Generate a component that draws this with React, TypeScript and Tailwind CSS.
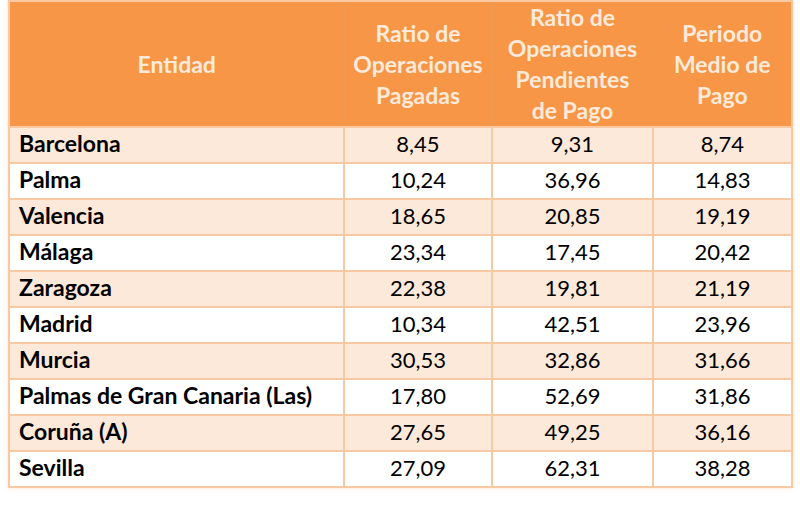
const rows: [string, string, string, string][] = [
  ['Barcelona', '8,45', '9,31', '8,74'],
  ['Palma', '10,24', '36,96', '14,83'],
  ['Valencia', '18,65', '20,85', '19,19'],
  ['Málaga', '23,34', '17,45', '20,42'],
  ['Zaragoza', '22,38', '19,81', '21,19'],
  ['Madrid', '10,34', '42,51', '23,96'],
  ['Murcia', '30,53', '32,86', '31,66'],
  ['Palmas de Gran Canaria (Las)', '17,80', '52,69', '31,86'],
  ['Coruña (A)', '27,65', '49,25', '36,16'],
  ['Sevilla', '27,09', '62,31', '38,28'],
]

export default function App() {
  return (
    <div className="w-[800px] h-[507px] bg-white pl-[8px] font-['Lato',sans-serif]">
      <table className="border-collapse table-fixed w-[783px] border-2 border-[#f8c9a2] shadow-[0_0_4px_rgba(247,150,70,0.25)]">
        <colgroup>
          <col className="w-[335px]" />
          <col className="w-[148px]" />
          <col className="w-[161px]" />
          <col className="w-[139px]" />
        </colgroup>
        <thead>
          <tr className="bg-[#f79646] text-[#fdeada] font-bold text-[23px] leading-[31px] h-[124px]">
            <th className="text-center align-middle border-r border-[#f39a52]">Entidad</th>
            <th className="text-center align-middle border-r border-[#f39a52]">
              Ratio de<br />Operaciones<br />Pagadas
            </th>
            <th className="text-center align-middle border-r border-[#f39a52]">
              Ratio de<br />Operaciones<br />Pendientes<br />de Pago
            </th>
            <th className="text-center align-middle">
              Periodo<br />Medio de<br />Pago
            </th>
          </tr>
        </thead>
        <tbody className="text-[22px] text-black">
          {rows.map((r, i) => (
            <tr key={r[0]} className={`h-[36px] ${i % 2 === 0 ? 'bg-[#fde9d9]' : 'bg-white'}`}>
              <td className="border-2 border-[#f8c9a2] pl-[9px] pb-[3px] text-[23px] font-bold leading-none">{r[0]}</td>
              <td className="border-2 border-[#f8c9a2] pb-[3px] text-center leading-none">{r[1]}</td>
              <td className="border-2 border-[#f8c9a2] pb-[3px] text-center leading-none">{r[2]}</td>
              <td className="border-2 border-[#f8c9a2] pb-[3px] text-center leading-none">{r[3]}</td>
            </tr>
          ))}
        </tbody>
      </table>
    </div>
  )
}
